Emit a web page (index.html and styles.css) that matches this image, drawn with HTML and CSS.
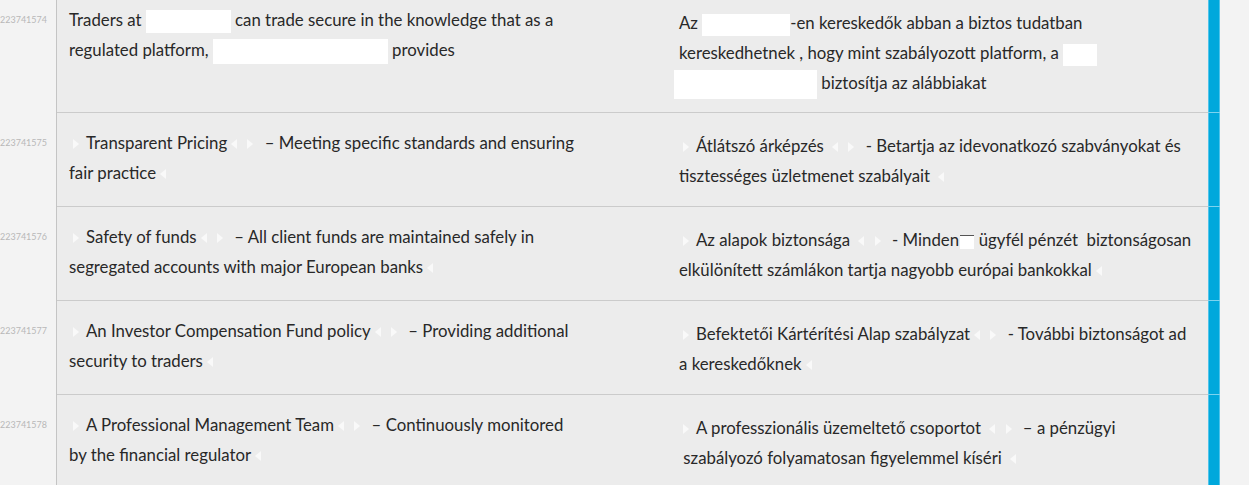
FILE: index.html
```html
<!DOCTYPE html>
<html lang="en">
  <head>
    <meta charset="UTF-8" />
    <title>Translation grid</title>
    <link rel="stylesheet" href="styles.css">
  </head>
  <body>
    <div class="grid">
      <div class="row first">
        <div class="seg-id">223741574</div>
        <div class="cell source">Traders at <span class="mask m1"></span> can trade secure in the knowledge that as a<br>regulated platform, <span class="mask m2"></span> provides</div>
        <div class="cell target">Az <span class="mask m3"></span>-en kereskedők abban a biztos tudatban<br>kereskedhetnek , hogy mint szabályozott platform, a <span class="mask m4"></span><br><span class="mask m5"></span> biztosítja az alábbiakat</div>
        <div class="bar"></div>
        <div class="side"></div>
      </div>

      <div class="row">
        <div class="seg-id">223741575</div>
        <div class="cell source"><span class="tag open"></span>Transparent Pricing<span class="tag close"></span> <span class="tag open"></span> – Meeting specific standards and ensuring<br>fair practice<span class="tag close"></span></div>
        <div class="cell target"><span class="tag open"></span>Átlátszó árképzés <span class="tag close"></span> <span class="tag open"></span> - Betartja az idevonatkozó szabványokat és<br>tisztességes üzletmenet szabályait <span class="tag close"></span></div>
        <div class="bar"></div>
        <div class="side"></div>
      </div>

      <div class="row">
        <div class="seg-id">223741576</div>
        <div class="cell source"><span class="tag open"></span>Safety of funds<span class="tag close"></span> <span class="tag open"></span> – All client funds are maintained safely in<br>segregated accounts with major European banks<span class="tag close"></span></div>
        <div class="cell target"><span class="tag open"></span>Az alapok biztonsága <span class="tag close"></span> <span class="tag open"></span> - Minden <span class="mask mini"></span> ügyfél pénzét&nbsp; biztonságosan<br>elkülönített számlákon tartja nagyobb európai bankokkal<span class="tag close"></span></div>
        <div class="bar"></div>
        <div class="side"></div>
      </div>

      <div class="row">
        <div class="seg-id">223741577</div>
        <div class="cell source"><span class="tag open"></span>An Investor Compensation Fund policy<span class="tag close"></span> <span class="tag open"></span> – Providing additional<br>security to traders<span class="tag close"></span></div>
        <div class="cell target"><span class="tag open"></span>Befektetői Kártérítési Alap szabályzat<span class="tag close"></span> <span class="tag open"></span> - További biztonságot ad<br>a kereskedőknek<span class="tag close"></span></div>
        <div class="bar"></div>
        <div class="side"></div>
      </div>

      <div class="row">
        <div class="seg-id">223741578</div>
        <div class="cell source"><span class="tag open"></span>A Professional Management Team<span class="tag close"></span> <span class="tag open"></span> – Continuously monitored<br>by the financial regulator<span class="tag close"></span></div>
        <div class="cell target"><span class="tag open"></span>A professzionális üzemeltető csoportot <span class="tag close"></span> <span class="tag open"></span> – a pénzügyi<br>&nbsp;szabályozó folyamatosan figyelemmel kíséri <span class="tag close"></span></div>
        <div class="bar"></div>
        <div class="side"></div>
      </div>
    </div>
  </body>
</html>
```

FILE: styles.css
```css
body {
  margin: 0;
  padding: 0;
  font-family: Lato, "Open Sans", sans-serif;
  background-color: #f3f3f3;
  overflow: hidden;
}

.grid {
  display: flex;
  flex-direction: column;
}

.row {
  display: flex;
  height: 94px;
}

.row.first {
  height: 113px;
}

.seg-id {
  width: 57px;
  flex: none;
  background: #f3f3f3;
  color: #b8b8b8;
  font-size: 9px;
  line-height: 30px;
  padding: 15px 9px 0 0;
  box-sizing: border-box;
  text-align: right;
  white-space: nowrap;
  border-right: 1px solid #c4c4c4;
}

.cell {
  background: #ececec;
  color: #282828;
  font-size: 16.8px;
  line-height: 30px;
  padding: 15px 12px 0 12px;
  box-sizing: border-box;
  border-bottom: 1px solid #cbcbcb;
  white-space: nowrap;
}

.source {
  width: 610px;
  flex: none;
}

.target {
  width: 541px;
  flex: none;
  padding-top: 18px;
}

.row.first .seg-id,
.row.first .source {
  padding-top: 5px;
}

.row.first .target {
  padding-top: 8px;
}

.bar {
  width: 12px;
  flex: none;
  background: #00a8dc;
  border-bottom: 1px solid #7dd3ef;
  box-sizing: border-box;
  box-shadow: inset 1px 0 0 #4fc3ea, inset -1px 0 0 #4fc3ea;
}

.side {
  flex: 1;
  background: #f3f3f3;
}

.tag {
  display: inline-block;
  width: 0;
  height: 0;
  border-top: 5px solid transparent;
  border-bottom: 5px solid transparent;
  vertical-align: 0;
}

.tag.open {
  border-left: 6px solid #f9f9f9;
  margin: 0 7px 0 4px;
}

.tag.close {
  border-right: 6px solid #f9f9f9;
  margin: 0 2px 0 4px;
}

.mask {
  display: inline-block;
  background: #ffffff;
  vertical-align: middle;
}

.m1 { width: 85px; height: 23px; }
.m2 { width: 175px; height: 25px; }
.m3 { width: 88px; height: 22px; }
.m4 { width: 34px; height: 22px; }
.m5 { width: 143px; height: 29px; margin-left: -5px; }

.mini {
  width: 14px;
  height: 13px;
  border-top: 1px solid #555;
  margin-left: -3px;
}
```
